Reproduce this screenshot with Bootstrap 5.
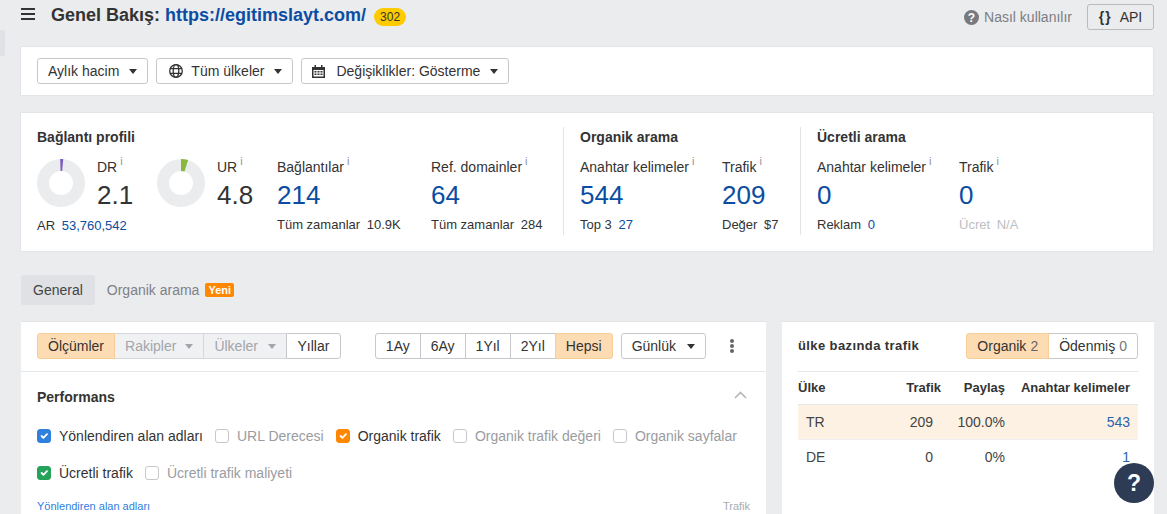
<!DOCTYPE html>
<html lang="tr">
<head>
<meta charset="utf-8">
<title>Genel Bakış</title>
<link href="https://cdn.jsdelivr.net/npm/bootstrap@5.3.0/dist/css/bootstrap.min.css" rel="stylesheet">
<style>
html,body{height:514px;overflow:hidden}
body{background:#ebecee;font-family:"Liberation Sans",Arial,sans-serif;font-size:14px;color:#333;line-height:20px;position:relative}
.edge-tab{position:absolute;left:0;top:30px;width:5px;height:26px;background:#dfe1e4;border-radius:0 2px 2px 0}
.page-wrap{padding:0 13px 0 20px;height:514px;overflow:hidden}
.top-bar{height:46px;padding-top:4px;align-items:flex-start}
.burger{display:block;margin:4px 16px 0 1px}
.page-title{font-size:18px;font-weight:700;line-height:22px;margin:0;color:#333}
.page-title a{color:#0b4da2;text-decoration:none}
.count-pill{background:#fdcb00;border-radius:9px;font-size:12px;line-height:18px;height:18px;width:32px;text-align:center;margin-left:8px;color:#333}
.how-link{color:#7b7e84;text-decoration:none;margin-right:15px}
.help-mini{margin-right:5px}
.api-btn{height:26px;width:67px;padding:0;font-size:14px;line-height:24px;border:1px solid #b9bbbf;border-radius:3px;background:#ebecee;color:#333}
.api-btn b{margin-right:8px;letter-spacing:1px}
.sheet{background:#fff;border:1px solid #e3e4e7;border-radius:0}
.filter-sheet{height:50px;padding:11px 16px;gap:8px}
.soft-btn{height:26px;padding:0 10px;font-size:14px;line-height:24px;color:#333;background:#fff;border:1px solid #c6c8cc;border-radius:3px;white-space:nowrap;display:inline-flex;align-items:center}
.soft-btn:hover{color:#333;background:#fff;border-color:#c6c8cc}
.soft-btn.dropdown-toggle::after{margin-left:10px;border-top:5px solid #333;border-left:4.5px solid transparent;border-right:4.5px solid transparent;border-bottom:0;vertical-align:middle}
.soft-btn svg{margin-right:8px;margin-left:2px}
.soft-btn svg.cal-ico{margin-right:11px;margin-left:0}
.stats-sheet{height:140px;margin-top:16px;padding:14px 16px 0}
.stat-group{height:108px}
.group-a{width:526px}
.group-b{width:237px;padding-left:16px;border-left:1px solid #e3e4e7}
.group-c{padding-left:16px;border-left:1px solid #e3e4e7}
.group-title{font-weight:700;font-size:14px;line-height:20px;margin:0 0 10px;color:#333}
.stat-cell{flex:none}
.stat-label{line-height:20px;height:20px;white-space:nowrap}
.stat-label sup{font-size:11px;color:#8f9196;top:-.65em;margin-left:3px;font-weight:400}
.stat-big{font-size:26px;line-height:36px;height:36px;color:#333}
.stat-big.is-link{color:#0b4da2}
.stat-sub{font-size:13px;line-height:16px;margin-top:4px;white-space:nowrap}
.stat-sub.gauge-sub{margin-top:5px}
.stat-sub span{margin-left:3px}
.stat-sub .blue{color:#0b4da2}
.stat-sub.muted-sub{color:#bcbec2}
.gauge-wrap{width:120px}
.gauge-cell{display:flex;gap:12px;width:120px}
.gauge-cell svg{display:block;margin-top:2px}
.w-bag{width:154px}.w-ref{width:130px}.w-ak{width:142px}
.tab-row{margin:23px 0 16px 1px;height:30px;align-items:center}
.tab-on{background:#dfe1e5;border-radius:3px;height:30px;line-height:30px;padding:0 12px;color:#444;text-decoration:none}
.tab-off{color:#7f8186;text-decoration:none;margin-left:12px}
.new-tag{background:#ff8800;color:#fff;font-weight:700;font-size:11px;line-height:14px;height:14px;padding:0 3px;border-radius:2px;margin-left:6px}
.panels{gap:16px;margin-left:1px}
.panel-left{width:745px;height:260px;flex:none;border-width:1px 0 0 0}
.panel-right{width:372px;height:260px;flex:none;border-width:1px 0 0 0}
.panel-bar{height:50px;padding:11px 16px 0;border-bottom:1px solid #e6e7ea}
.seg{display:inline-flex}
.seg .soft-btn{border-radius:0;margin-left:-1px}
.seg .soft-btn:first-child{border-radius:3px 0 0 3px;margin-left:0}
.seg .soft-btn:last-child{border-radius:0 3px 3px 0}
.soft-btn.picked,.soft-btn.picked:hover{background:#fedcb3;border-color:#f8cd98;position:relative;z-index:1}
.soft-btn.locked{background:#f0f1f3;color:#a3a5aa;border-color:#d5d7da}
.soft-btn.locked.dropdown-toggle::after{border-top-color:#a3a5aa;margin-left:9px}
.soft-btn.locked.wide-lock.dropdown-toggle::after{margin-left:10px}
.soft-btn.year-btn{padding:0 10.5px}
.soft-btn.day-btn.dropdown-toggle::after{margin-left:11px}
.seg-one .soft-btn{padding:0 10px}
.kebab{margin:6px 13px 0 21px;display:block}
.perf-head{padding:15px 16px 0;height:45px}
.perf-title{font-weight:700;font-size:14px;margin:0;line-height:20px}
.chev-up{margin:4px 3px 0 0}
.check-line{padding:0 16px;height:37px;gap:12px;align-items:center}
.check-item{display:flex;align-items:center;gap:8px;margin:0;padding:0;min-height:0;white-space:nowrap;color:#333}
.check-item .form-check-input{float:none;margin:0;width:14px;height:14px;border:1px solid #c6c8cc;border-radius:3px}
.check-item.off{color:#9a9ca1}
.form-check-input.tick-blue:checked{background-color:#2f80dc;border-color:#2f80dc}
.form-check-input.tick-orange:checked{background-color:#ff8800;border-color:#ff8800}
.form-check-input.tick-green:checked{background-color:#27a25b;border-color:#27a25b}
.chart-head{padding:0 16px;margin-top:7px;font-size:11px;line-height:16px}
.chart-head .axis-l{color:#2f80dc}
.chart-head .axis-r{color:#a9abb0}
.right-head{padding:11px 16px 12px}
.right-title{font-size:13px;font-weight:700;margin:2px 0 0;line-height:22px;letter-spacing:.4px}
.seg .count-dim{color:#777;margin-left:4px}
.seg .picked .count-dim{color:#666}
.table-wrap{padding:0 16px}
.land-table{width:340px;table-layout:fixed;margin:0;border-collapse:collapse;color:#444;border-top:1px solid #e6e7ea}
.land-table th{font-size:13px;line-height:18px;height:33px;padding:0;font-weight:700;text-align:right;border-bottom:1px solid #e6e7ea;background:transparent;color:#333;vertical-align:middle}
.land-table th:first-child{text-align:left}
.land-table td{height:35px;padding:0;text-align:right;font-size:14px;border-bottom:1px solid #eeeff1;background:transparent;color:#444;vertical-align:middle}
.land-table td:first-child{text-align:left;padding-left:8px}
.land-table td:nth-child(2){padding-right:8px}
.land-table td:last-child,.land-table th:last-child{padding-right:8px}
.land-table td a{color:#2d62ac;text-decoration:none}
.land-table tr.hot td{background:#fdf1e3}
.land-table tr.plain td{border-bottom:0}
.help-bubble{position:absolute;left:1114px;top:463px;width:40px;height:40px;border-radius:50%;background:#2d3b55;color:#fff;font-size:23px;font-weight:700;line-height:40px;text-align:center}
</style>
</head>
<body>
<div class="edge-tab"></div>
<div class="page-wrap">
  <div class="d-flex top-bar">
    <svg class="burger" width="14" height="12" viewBox="0 0 14 12"><rect width="14" height="2" y="0" fill="#333"/><rect width="14" height="2" y="5" fill="#333"/><rect width="14" height="2" y="10" fill="#333"/></svg>
    <h1 class="page-title">Genel Bakış: <a href="#">https://egitimslayt.com/</a></h1>
    <span class="count-pill mt-1">302</span>
    <div class="ms-auto d-flex align-items-center">
      <svg class="help-mini" width="15" height="15" viewBox="0 0 15 15"><circle cx="7.5" cy="7.5" r="7.5" fill="#77797d"/><text x="7.5" y="12" font-size="12" font-weight="700" text-anchor="middle" fill="#fff" font-family="Liberation Sans">?</text></svg>
      <a class="how-link" href="#">Nasıl kullanılır</a>
      <button class="api-btn" type="button"><b>{}</b>API</button>
    </div>
  </div>

  <div class="sheet d-flex filter-sheet">
    <button class="btn soft-btn dropdown-toggle" type="button">Aylık hacim</button>
    <button class="btn soft-btn dropdown-toggle" type="button">
      <svg width="14" height="14" viewBox="0 0 14 14" fill="none" stroke="#333" stroke-width="1.3"><circle cx="7" cy="7" r="6.300"/><ellipse cx="7" cy="7" rx="2.800" ry="6.300"/><path d="M.9 4.700h12.200M.9 9.300h12.200"/></svg>
      Tüm ülkeler</button>
    <button class="btn soft-btn dropdown-toggle" type="button">
      <svg class="cal-ico" width="13" height="13" viewBox="0 0 13 13"><path fill="#333" d="M0 2h2.500V0h1.500v2h5V0h1.500v2H13v11H0z"/><path fill="#fff" d="M1.500 5h10v6.500h-10z"/><path fill="#333" d="M2.500 6h2v1.500h-2zM5.500 6h2v1.500h-2zM8.500 6h2v1.500h-2zM2.500 8.500h2V10h-2zM5.500 8.500h2V10h-2zM8.500 8.500h2V10h-2z"/></svg>
      Değişiklikler: Gösterme</button>
  </div>

  <div class="sheet d-flex stats-sheet">
    <div class="stat-group group-a">
      <p class="group-title">Bağlantı profili</p>
      <div class="d-flex">
        <div class="stat-cell gauge-wrap">
          <div class="gauge-cell">
            <svg width="48" height="48" viewBox="0 0 48 48"><circle cx="24" cy="24" r="18" fill="none" stroke="#ebecee" stroke-width="12"/><path d="M24 0 A24 24 0 0 1 27.100 .2 L25.600 12.100 A12 12 0 0 0 24 12Z" transform="rotate(-2 24 24)" fill="#7a5fc0"/></svg>
            <div>
              <div class="stat-label">DR<sup>i</sup></div>
              <div class="stat-big">2.1</div>
            </div>
          </div>
          <div class="stat-sub gauge-sub">AR <span class="blue">53,760,542</span></div>
        </div>
        <div class="stat-cell gauge-cell">
          <svg width="48" height="48" viewBox="0 0 48 48"><circle cx="24" cy="24" r="18" fill="none" stroke="#ebecee" stroke-width="12"/><path d="M24 0 A24 24 0 0 1 31.100 1.100 L27.500 12.500 A12 12 0 0 0 24 12Z" fill="#8ab83c"/></svg>
          <div>
            <div class="stat-label">UR<sup>i</sup></div>
            <div class="stat-big">4.8</div>
          </div>
        </div>
        <div class="stat-cell w-bag">
          <div class="stat-label">Bağlantılar<sup>i</sup></div>
          <div class="stat-big is-link">214</div>
          <div class="stat-sub">Tüm zamanlar <span>10.9K</span></div>
        </div>
        <div class="stat-cell w-ref">
          <div class="stat-label">Ref. domainler<sup>i</sup></div>
          <div class="stat-big is-link">64</div>
          <div class="stat-sub">Tüm zamanlar <span>284</span></div>
        </div>
      </div>
    </div>
    <div class="stat-group group-b">
      <p class="group-title">Organik arama</p>
      <div class="d-flex">
        <div class="stat-cell w-ak">
          <div class="stat-label">Anahtar kelimeler<sup>i</sup></div>
          <div class="stat-big is-link">544</div>
          <div class="stat-sub">Top 3 <span class="blue">27</span></div>
        </div>
        <div class="stat-cell">
          <div class="stat-label">Trafik<sup>i</sup></div>
          <div class="stat-big is-link">209</div>
          <div class="stat-sub">Değer <span>$7</span></div>
        </div>
      </div>
    </div>
    <div class="stat-group group-c">
      <p class="group-title">Ücretli arama</p>
      <div class="d-flex">
        <div class="stat-cell w-ak">
          <div class="stat-label">Anahtar kelimeler<sup>i</sup></div>
          <div class="stat-big is-link">0</div>
          <div class="stat-sub">Reklam <span class="blue">0</span></div>
        </div>
        <div class="stat-cell">
          <div class="stat-label">Trafik<sup>i</sup></div>
          <div class="stat-big is-link">0</div>
          <div class="stat-sub muted-sub">Ücret <span>N/A</span></div>
        </div>
      </div>
    </div>
  </div>

  <div class="d-flex tab-row">
    <a class="tab-on" href="#">General</a>
    <a class="tab-off" href="#">Organik arama</a>
    <span class="new-tag">Yeni</span>
  </div>

  <div class="d-flex panels">
    <div class="sheet panel-left">
      <div class="d-flex panel-bar">
        <div class="seg">
          <button class="btn soft-btn picked" type="button">Ölçümler</button>
          <button class="btn soft-btn locked dropdown-toggle" type="button">Rakipler</button>
          <button class="btn soft-btn locked wide-lock dropdown-toggle" type="button">Ülkeler</button>
          <button class="btn soft-btn year-btn" type="button">Yıllar</button>
        </div>
        <div class="seg seg-one ms-auto">
          <button class="btn soft-btn" type="button">1Ay</button>
          <button class="btn soft-btn" type="button">6Ay</button>
          <button class="btn soft-btn" type="button">1Yıl</button>
          <button class="btn soft-btn" type="button">2Yıl</button>
          <button class="btn soft-btn picked" type="button">Hepsi</button>
        </div>
        <button class="btn soft-btn day-btn dropdown-toggle ms-2" type="button">Günlük</button>
        <svg class="kebab" width="10" height="14" viewBox="0 0 10 14" fill="#666"><circle cx="5" cy="2" r="2"/><circle cx="5" cy="7" r="2"/><circle cx="5" cy="12" r="2"/></svg>
      </div>
      <div class="d-flex justify-content-between perf-head">
        <h2 class="perf-title">Performans</h2>
        <svg class="chev-up" width="13" height="8" viewBox="0 0 13 8" fill="none" stroke="#b5b7bb" stroke-width="1.600"><path d="M1 7l5.500-5.500L12 7"/></svg>
      </div>
      <div class="d-flex check-line">
        <label class="check-item"><input class="form-check-input tick-blue" type="checkbox" checked>Yönlendiren alan adları</label>
        <label class="check-item off"><input class="form-check-input" type="checkbox">URL Derecesi</label>
        <label class="check-item"><input class="form-check-input tick-orange" type="checkbox" checked>Organik trafik</label>
        <label class="check-item off"><input class="form-check-input" type="checkbox">Organik trafik değeri</label>
        <label class="check-item off"><input class="form-check-input" type="checkbox">Organik sayfalar</label>
      </div>
      <div class="d-flex check-line">
        <label class="check-item"><input class="form-check-input tick-green" type="checkbox" checked>Ücretli trafik</label>
        <label class="check-item off"><input class="form-check-input" type="checkbox">Ücretli trafik maliyeti</label>
      </div>
      <div class="d-flex justify-content-between chart-head">
        <span class="axis-l">Yönlendiren alan adları</span>
        <span class="axis-r">Trafik</span>
      </div>
    </div>

    <div class="sheet panel-right">
      <div class="d-flex justify-content-between right-head">
        <h2 class="right-title">ülke bazında trafik</h2>
        <div class="seg">
          <button class="btn soft-btn picked" type="button">Organik<span class="count-dim">2</span></button>
          <button class="btn soft-btn" type="button">Ödenmiş<span class="count-dim">0</span></button>
        </div>
      </div>
      <div class="table-wrap">
        <table class="table land-table">
          <colgroup><col style="width:70px"><col style="width:73px"><col style="width:64px"><col style="width:133px"></colgroup>
          <thead><tr><th>Ülke</th><th>Trafik</th><th>Paylaş</th><th>Anahtar kelimeler</th></tr></thead>
          <tbody>
            <tr class="hot"><td>TR</td><td>209</td><td>100.0%</td><td><a href="#">543</a></td></tr>
            <tr class="plain"><td>DE</td><td>0</td><td>0%</td><td><a href="#">1</a></td></tr>
          </tbody>
        </table>
      </div>
    </div>
  </div>
</div>
<div class="help-bubble">?</div>
<script src="https://cdn.jsdelivr.net/npm/bootstrap@5.3.0/dist/js/bootstrap.bundle.min.js"></script>
</body>
</html>
